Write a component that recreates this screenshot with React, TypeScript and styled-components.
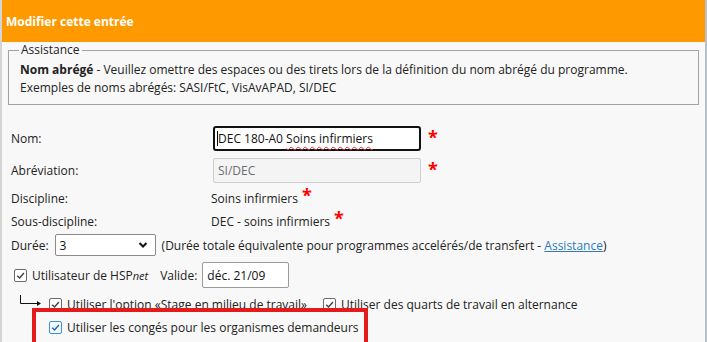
import React from "react";
import styled, { createGlobalStyle } from "styled-components";

const Global = createGlobalStyle`
  html, body { margin: 0; padding: 0; background: #f8f8f8; }
  body {
    font-family: "Open Sans", "Liberation Sans", sans-serif;
    font-size: 12px;
    color: #222;
  }
`;

const Dialog = styled.div`
  width: 707px;
  height: 342px;
  box-sizing: border-box;
  border-left: 2px solid #d4d4d4;
  border-right: 2px solid #b9c1cb;
  background: #f8f8f8;
  overflow: hidden;
  display: flex;
  flex-direction: column;
`;

const Header = styled.div`
  height: 42px;
  flex: none;
  background: #ff9900;
  color: #fff;
  font-weight: 700;
  font-size: 12px;
  display: flex;
  align-items: center;
  padding-left: 4px;
`;

const Fieldset = styled.fieldset`
  margin: 0 6px;
  padding: 3px 10px 7px 11px;
  border: 1px solid #a3a3a3;
  height: 63px;
  flex: none;
  box-sizing: border-box;
  line-height: 18px;
`;

const Legend = styled.legend`
  padding: 0 2px;
  margin-left: -1px;
  line-height: 16px;
  color: #222;
`;

const HelpLine = styled.div`
  white-space: nowrap;
`;

const Form = styled.div`
  padding: 0 0 0 9px;
  display: flex;
  flex-direction: column;
`;

const Row = styled.div<{ $top: number; $h: number }>`
  display: flex;
  align-items: center;
  margin-top: ${(p) => p.$top}px;
  height: ${(p) => p.$h}px;
  flex: none;
  white-space: nowrap;
`;

const Label = styled.div`
  width: 200px;
  flex: none;
`;

const Field = styled.div<{ $focused?: boolean; $disabled?: boolean; $w: number; $h: number; $ml?: number }>`
  box-sizing: border-box;
  width: ${(p) => p.$w}px;
  height: ${(p) => p.$h}px;
  margin-left: ${(p) => p.$ml ?? 2}px;
  display: flex;
  align-items: center;
  padding-left: ${(p) => (p.$focused ? 2 : 4)}px;
  border: ${(p) => (p.$focused ? "2px solid #111" : p.$disabled ? "1px solid #cfcfcf" : "1px solid #9a9a9a")};
  border-radius: ${(p) => (p.$focused ? 3 : 2)}px;
  background: ${(p) => (p.$disabled ? "#f4f4f4" : "#fff")};
  color: ${(p) => (p.$disabled ? "#6d6d6d" : "#111")};
  white-space: pre;
`;

const Caret = styled.span`
  display: inline-block;
  width: 1px;
  height: 15px;
  background: #000;
`;

const Misspelled = styled.span`
  text-decoration: underline wavy #e0302a;
  text-decoration-thickness: 1px;
  text-underline-offset: 3px;
`;

const Star = styled.span<{ $raise?: number; $ml?: number }>`
  color: #f00;
  font-weight: 700;
  font-size: 18px;
  line-height: 1;
  margin-left: ${(p) => p.$ml ?? 7}px;
  position: relative;
  top: ${(p) => -(p.$raise ?? 2)}px;
`;

const Select = styled.div`
  box-sizing: border-box;
  width: 101px;
  height: 22px;
  margin-left: 6px;
  border: 1px solid #8a8a8a;
  border-radius: 2px;
  background: #fff;
  display: flex;
  align-items: center;
  justify-content: space-between;
  padding: 0 7px 0 4px;
  color: #111;
`;

const Note = styled.span`
  margin-left: 6px;
`;

const Link = styled.a`
  color: #2b7bc0;
  text-decoration: underline;
`;

const Box = styled.span<{ $blue?: boolean }>`
  box-sizing: border-box;
  width: 13px;
  height: 13px;
  flex: none;
  border: 1px solid ${(p) => (p.$blue ? "#3c8fd6" : "#6b6b6b")};
  border-radius: 2px;
  background: ${(p) => (p.$blue ? "#f2f8fe" : "#fff")};
  display: inline-flex;
  align-items: center;
  justify-content: center;
  color: ${(p) => (p.$blue ? "#1d6bb3" : "#444")};
`;

const CheckItem = styled.label<{ $ml: number }>`
  display: inline-flex;
  align-items: center;
  gap: 5px;
  margin-left: ${(p) => p.$ml}px;
  white-space: nowrap;
`;

const Italic = styled.i`
  font-size: 11px;
`;

const ValidLabel = styled.span`
  margin-left: 12px;
`;

const Arrow = styled.svg`
  flex: none;
`;

const Highlight = styled.div`
  margin-top: -5px;
  margin-left: 21px;
  width: 336px;
  height: 40px;
  box-sizing: border-box;
  border: 4px solid #e31b1b;
  border-bottom: none;
  padding: 7px 0 0 13px;
  display: flex;
  align-items: flex-start;
  position: relative;
`;

function Check({ blue }: { blue?: boolean }) {
  return (
    <Box $blue={blue}>
      <svg width="9" height="9" viewBox="0 0 10 10">
        <path d="M1.3 5.2 L4 7.8 L8.8 2.2" fill="none" stroke="currentColor" strokeWidth="1.6" />
      </svg>
    </Box>
  );
}

export default function App() {
  return (
    <>
      <Global />
      <Dialog>
        <Header>Modifier cette entrée</Header>
        <Fieldset>
          <Legend>Assistance</Legend>
          <HelpLine>
            <b>Nom abrégé</b> - Veuillez omettre des espaces ou des tirets lors de la définition du nom abrégé du programme.
          </HelpLine>
          <HelpLine>Exemples de noms abrégés: SASI/FtC, VisAvAPAD, SI/DEC</HelpLine>
        </Fieldset>
        <Form>
          <Row $top={21} $h={25}>
            <Label>Nom:</Label>
            <Field $focused $w={208} $h={25}>
              <Caret />
              {"DEC 180-A0 "}
              <Misspelled>Soins infirmiers</Misspelled>
            </Field>
            <Star>*</Star>
          </Row>
          <Row $top={7} $h={25}>
            <Label>Abréviation:</Label>
            <Field $disabled $w={208} $h={25}>SI/DEC</Field>
            <Star>*</Star>
          </Row>
          <Row $top={5} $h={20}>
            <Label>Discipline:</Label>
            <span>Soins infirmiers</span>
            <Star $raise={3} $ml={4}>*</Star>
          </Row>
          <Row $top={3} $h={20}>
            <Label>Sous-discipline:</Label>
            <span>DEC - soins infirmiers</span>
            <Star $raise={3} $ml={4}>*</Star>
          </Row>
          <Row $top={3} $h={22}>
            <span>Durée:</span>
            <Select>
              <span>3</span>
              <svg width="10" height="8" viewBox="0 0 10 8">
                <path d="M1.5 2 L5 5.5 L8.5 2" fill="none" stroke="#111" strokeWidth="2" />
              </svg>
            </Select>
            <Note>
              (Durée totale équivalente pour programmes accelérés/de transfert - <Link>Assistance</Link>)
            </Note>
          </Row>
          <Row $top={6} $h={26}>
            <CheckItem $ml={3}>
              <Check />
              <span>
                Utilisateur de HSP<Italic>net</Italic>
              </span>
            </CheckItem>
            <ValidLabel>Valide:</ValidLabel>
            <Field $w={87} $h={26} $ml={5}>
              déc. 21/09
            </Field>
          </Row>
          <Row $top={7} $h={18}>
            <Arrow width="34" height="18" viewBox="0 0 34 18">
              <path d="M9.5 0 V8.5 H27" fill="none" stroke="#111" strokeWidth="1" />
              <path d="M26 6 L30 8.5 L26 11 Z" fill="#111" />
            </Arrow>
            <CheckItem $ml={4}>
              <Check />
              <span>Utiliser l'option «Stage en milieu de travail»</span>
            </CheckItem>
            <CheckItem $ml={16}>
              <Check />
              <span>Utiliser des quarts de travail en alternance</span>
            </CheckItem>
          </Row>
          <Highlight>
            <CheckItem $ml={0}>
              <Check blue />
              <span>Utiliser les congés pour les organismes demandeurs</span>
            </CheckItem>
          </Highlight>
        </Form>
      </Dialog>
    </>
  );
}
